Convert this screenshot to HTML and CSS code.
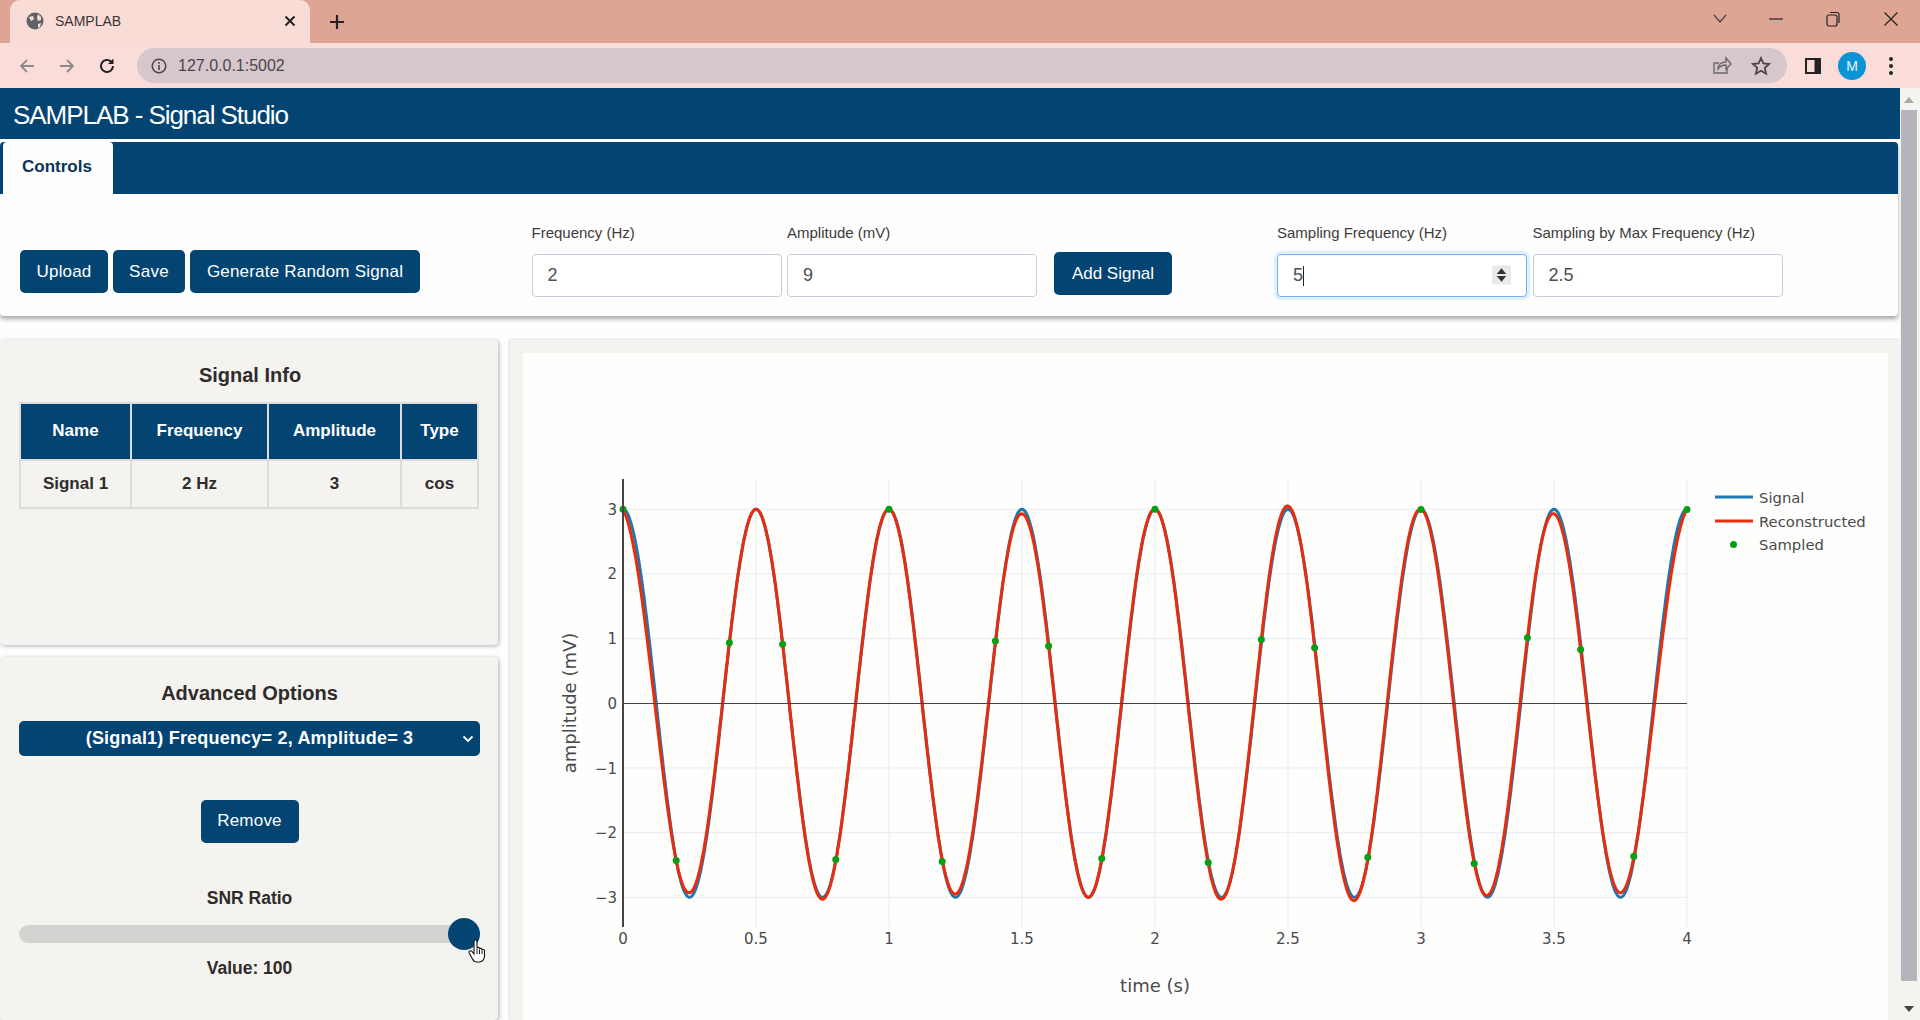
FILE: index.html
```html
<!DOCTYPE html>
<html lang="en">
<head>
<meta charset="utf-8">
<title>SAMPLAB</title>
<link rel="stylesheet" href="styles.css">
</head>
<body>
<div class="tabstrip">
  <div class="tab">
    <svg class="favicon" viewBox="0 0 18 18"><circle cx="9" cy="9" r="8.5" fill="#5f6368"/><path d="M3 5l4-1 1 3-3 2zM12 2l3 3 0 3-3 1-1-3zM12 12l3-1-1 4-2 1z" fill="#f9dcd6"/></svg>
    <span class="tab-title">SAMPLAB</span>
    <svg class="tab-close" viewBox="0 0 12 12"><path d="M1.5 1.5l9 9M10.5 1.5l-9 9" stroke="#222" stroke-width="2"/></svg>
  </div>
  <svg class="new-tab" viewBox="0 0 16 16"><path d="M8 1v14M1 8h14" stroke="#222" stroke-width="2.2"/></svg>
  <div class="window-btns">
    <svg class="win w-chev" viewBox="0 0 16 16"><path d="M2 4l6 7 6-7" fill="none" stroke="#444" stroke-width="1.2"/></svg>
    <svg class="win w-min" viewBox="0 0 16 16"><path d="M1 8h14" stroke="#222" stroke-width="1.2"/></svg>
    <svg class="win w-rest" viewBox="0 0 16 16"><rect x="2" y="4" width="10" height="11" rx="2" fill="none" stroke="#222" stroke-width="1.2"/><path d="M5 1.500h7a2 2 0 0 1 2 2V12" fill="none" stroke="#222" stroke-width="1.2"/></svg>
    <svg class="win w-close" viewBox="0 0 16 16"><path d="M1.500 1.500l13 13M14.500 1.500l-13 13" stroke="#222" stroke-width="1.2"/></svg>
  </div>
</div>
<div class="toolbar">
  <svg class="nav nav-first" viewBox="0 0 18 18"><path d="M16 9H3M9 3L3 9l6 6" fill="none" stroke="#8d8a8c" stroke-width="1.800"/></svg>
  <svg class="nav" viewBox="0 0 18 18"><path d="M2 9h13M9 3l6 6-6 6" fill="none" stroke="#8d8a8c" stroke-width="1.800"/></svg>
  <svg class="nav" viewBox="0 0 18 18"><path d="M15 9a6 6 0 1 1-1.800-4.300" fill="none" stroke="#222" stroke-width="2"/><path d="M15.500 1.500v5.500H10z" fill="#222"/></svg>
  <div class="urlbar">
    <svg class="info" viewBox="0 0 16 16"><circle cx="8" cy="8" r="6.800" fill="none" stroke="#4a4648" stroke-width="1.500"/><path d="M8 7v5M8 4v1.800" stroke="#4a4648" stroke-width="1.600"/></svg>
    <span class="url">127.0.0.1:5002</span>
    <svg class="share" viewBox="0 0 20 20"><path d="M15 11v6H2V7h5" fill="none" stroke="#6b686a" stroke-width="1.400"/><path d="M6 13c0-5 4-7 8-7V2l5 6-5 5V9c-4 0-6 1-8 4z" fill="none" stroke="#6b686a" stroke-width="1.400"/></svg>
    <svg class="star" viewBox="0 0 20 20"><path d="M10 2l2.400 5.400 5.800.6-4.400 3.900 1.300 5.800L10 14.700l-5.100 3 1.300-5.800L1.800 8l5.800-.6z" fill="none" stroke="#4a4648" stroke-width="1.800"/></svg>
  </div>
  <svg class="panel-ico" viewBox="0 0 18 18"><rect x="1" y="1" width="16" height="16" fill="#222"/><rect x="3" y="3" width="7.500" height="12" fill="#f9dcd8"/></svg>
  <div class="avatar">M</div>
  <svg class="kebab" viewBox="0 0 6 20"><circle cx="3" cy="3" r="2" fill="#222"/><circle cx="3" cy="10" r="2" fill="#222"/><circle cx="3" cy="17" r="2" fill="#222"/></svg>
</div>

<div class="viewport">
  <div class="app">
    <header class="app-header">SAMPLAB - Signal Studio</header>
    <section class="controls-card">
      <nav class="tabbar"><button class="tabbar-tab">Controls</button></nav>
      <div class="controls">
        <div class="btn-group">
          <button class="btn btn-upload">Upload</button>
          <button class="btn btn-save">Save</button>
          <button class="btn btn-gen">Generate Random Signal</button>
        </div>
        <div class="field-pair pair-signal">
          <label class="field"><span class="field-label">Frequency (Hz)</span><input class="field-input" value="2"></label>
          <label class="field"><span class="field-label">Amplitude (mV)</span><input class="field-input" value="9"></label>
        </div>
        <button class="btn btn-add">Add Signal</button>
        <div class="field-pair pair-sampling">
          <label class="field"><span class="field-label">Sampling Frequency (Hz)</span>
            <span class="input-wrap">
              <input class="field-input is-focus" value="5">
              <span class="caret"></span>
              <svg class="spinner" viewBox="0 0 20 20"><rect width="20" height="20" fill="#e9e9e9"/><path d="M10 3l5 6H5zM10 17l-5-6h10z" fill="#333"/></svg>
            </span>
          </label>
          <label class="field"><span class="field-label">Sampling by Max Frequency (Hz)</span><input class="field-input" value="2.5"></label>
        </div>
      </div>
    </section>

    <main class="workspace">
      <div class="sidebar">
        <section class="panel panel-info">
          <h2 class="panel-title">Signal Info</h2>
          <table class="info-table">
            <thead><tr><th class="c-name">Name</th><th class="c-freq">Frequency</th><th class="c-amp">Amplitude</th><th class="c-type">Type</th></tr></thead>
            <tbody><tr><td>Signal 1</td><td>2 Hz</td><td>3</td><td>cos</td></tr></tbody>
          </table>
        </section>
        <section class="panel panel-adv">
          <h2 class="panel-title">Advanced Options</h2>
          <div class="select-wrap">
            <select class="signal-select"><option>(Signal1) Frequency= 2, Amplitude= 3</option></select>
            <svg class="select-chev" viewBox="0 0 12 8"><path d="M1.500 1.500L6 6l4.500-4.500" fill="none" stroke="#fff" stroke-width="1.800"/></svg>
          </div>
          <div class="center-row"><button class="btn btn-remove">Remove</button></div>
          <div class="snr-label">SNR Ratio</div>
          <div class="slider-wrap">
            <input class="snr-slider" type="range" min="0" max="100" value="100">
            <svg class="hand" viewBox="0 0 18 24"><path d="M6 2.500c0-2 3-2 3 0v7c0-1.500 2.500-1.500 2.500 0v1c0-1.500 2.500-1.500 2.500 0v1c0-1.300 2.500-1.300 2.500 0V17c0 3-2 6-5 6H9c-2.500 0-3.500-1-4.500-3L1.200 14c-1-2 1.500-3 2.800-1.500L6 15z" fill="#fff" stroke="#111" stroke-width="1.100"/><path d="M9 10v5M11.500 11v4M14 12v3" stroke="#111" stroke-width="1"/></svg>
          </div>
          <div class="snr-value">Value: 100</div>
        </section>
      </div>

      <section class="panel-plot">
        <svg id="chart" class="chart" viewBox="523 353 1365 667">
          <g class="grid">
            <path d="M756 479V927M889 479V927M1022 479V927M1155 479V927M1288 479V927M1421 479V927M1554 479V927M1687 479V927"/>
            <path d="M623 509.300H1687M623 574H1687M623 638.700H1687M623 768H1687M623 832.700H1687M623 897.300H1687"/>
          </g>
          <g id="traces"></g>
          <path class="zero" d="M623 703.500H1687"/>
          <path class="axis" d="M623 479V927"/>
          <g class="tick-y">
            <text x="617" y="514.500">3</text><text x="617" y="579">2</text><text x="617" y="644">1</text><text x="617" y="709">0</text>
            <text x="617" y="773.500">−1</text><text x="617" y="838">−2</text><text x="617" y="903">−3</text>
          </g>
          <g class="tick-x">
            <text x="623" y="944">0</text><text x="756" y="944">0.5</text><text x="889" y="944">1</text><text x="1022" y="944">1.5</text>
            <text x="1155" y="944">2</text><text x="1288" y="944">2.5</text><text x="1421" y="944">3</text><text x="1554" y="944">3.5</text><text x="1687" y="944">4</text>
          </g>
          <text class="axis-title" x="1155" y="992">time (s)</text>
          <text class="axis-title" transform="translate(576 703) rotate(-90)">amplitude (mV)</text>
          <g class="legend">
            <path class="tr-signal" d="M1715 497H1753"/>
            <path class="tr-recon" d="M1715 521H1753"/>
            <circle class="tr-sample" cx="1733.500" cy="544.500" r="3.500"/>
            <text x="1759" y="503">Signal</text><text x="1759" y="527">Reconstructed</text><text x="1759" y="550">Sampled</text>
          </g>
        </svg>
      </section>
    </main>
  </div>
  <div class="scrollbar">
    <span class="sb-arrow sb-up"></span>
    <span class="sb-thumb"></span>
    <span class="sb-arrow sb-down"></span>
  </div>
</div>
<script src="chart.js"></script>
</body>
</html>
```
FILE: styles.css
```css
* { box-sizing: border-box; }
html, body { margin: 0; height: 1020px; overflow: hidden; }
body { font-family: "Liberation Sans", Arial, sans-serif; background: #fefefe; color: #2f2b2b; display: flex; flex-direction: column; }

/* browser chrome */
.tabstrip { height: 43px; background: #dfa594; display: flex; align-items: flex-end; padding-left: 10px; position: relative; flex: none; }
.tab { width: 300px; height: 43px; background: #f9dcd6; border-radius: 10px 10px 0 0; display: flex; align-items: center; padding: 0 14px 2px 16px; }
.favicon { width: 18px; height: 18px; }
.tab-title { font-size: 14px; margin-left: 11px; color: #3a3436; flex: 1; }
.tab-close { width: 12px; height: 12px; }
.new-tab { width: 16px; height: 16px; margin: 0 0 13px 19px; }
.window-btns { position: absolute; top: 0; left: 0; width: 100%; height: 100%; pointer-events: none; }
.win { position: absolute; top: 14px; width: 16px; height: 16px; }
.w-chev { left: 1712px; top: 11px; }
.w-min { left: 1768px; top: 11px; }
.w-rest { left: 1825px; top: 11px; }
.w-close { left: 1883px; top: 11px; }

.toolbar { height: 45px; background: #fadcd8; display: flex; align-items: center; padding: 0 0 0 18px; flex: none; }
.nav { width: 18px; height: 18px; margin-right: 22px; }
.urlbar { width: 1650px; height: 35px; margin-left: -1px; border-radius: 18px; background: #d6c6cd; display: flex; align-items: center; padding: 0 14px 0 14px; }
.info { width: 16px; height: 16px; }
.url { font-size: 16px; color: #4a4648; margin-left: 11px; flex: 1; }
.share { width: 20px; height: 20px; margin-right: 19px; }
.star { width: 20px; height: 20px; margin-right: 2px; }
.panel-ico { width: 18px; height: 18px; margin-left: 17px; }
.avatar { width: 28px; height: 28px; margin-left: 16px; border-radius: 50%; background: #0a94d6; color: #e8f4fb; font-size: 14px; display: flex; align-items: center; justify-content: center; }
.kebab { width: 6px; height: 20px; margin-left: 22px; }

.viewport { flex: 1; min-height: 0; display: flex; }
.app { flex: 1; min-width: 0; display: flex; flex-direction: column; }
.app-header { height: 51px; background: #034472; color: #fff; font-size: 26px; line-height: 55px; letter-spacing: -1.05px; padding-left: 13px; margin-bottom: 3px; flex: none; overflow: hidden; }

/* controls */
.controls-card { height: 174px; margin-right: 2px; flex: none; background: #fefefe; border-radius: 4px; box-shadow: 0 3px 4px rgba(60, 60, 70, 0.45); }
.tabbar { height: 52px; background: #034472; border-radius: 4px 4px 0 0; padding-left: 3px; }
.tabbar-tab { width: 110px; height: 52px; border: 0; border-radius: 4px 4px 0 0; background: #fefefe; color: #0c3358; font: bold 17px "Liberation Sans", Arial, sans-serif; padding: 0 2px 2px 0; }
.controls { height: 122px; padding: 30px 0 0 20px; display: flex; align-items: flex-start; }
.btn { height: 43px; border: 0; border-radius: 5px; background: #034472; color: #fff; font: 17px "Liberation Sans", Arial, sans-serif; padding: 0; }
.btn-group { display: flex; gap: 5px; margin-top: 26px; }
.btn-upload { width: 88px; letter-spacing: 0.15px; }
.btn-save { width: 72px; letter-spacing: 0.3px; }
.btn-gen { width: 230px; letter-spacing: 0.2px; }
.btn-remove { width: 98px; letter-spacing: 0.2px; }
.field-pair { display: flex; gap: 5.500px; }
.pair-signal { margin-left: 111.500px; }
.pair-sampling { margin-left: 105px; }
.btn-add { width: 118px; margin: 28px 0 0 17px; }
.field { width: 250px; display: block; }
.field-label { display: block; height: 18px; line-height: 18px; font-size: 15px; color: #3d3a3a; margin-bottom: 12px; white-space: nowrap; }
.field-input { width: 100%; height: 43px; border: 1.500px solid #c9cbdd; border-radius: 4px; padding: 0 15px; font: 18px "Liberation Sans", Arial, sans-serif; color: #4a4f55; background: #fff; outline: 0; }
.field-input.is-focus { border-color: #73b3f3; box-shadow: 0 0 0 3px rgba(120, 190, 250, 0.22); }
.input-wrap { display: block; position: relative; }
.caret { position: absolute; left: 26px; top: 12px; width: 1px; height: 20px; background: #222; }
.spinner { position: absolute; right: 16px; top: 11px; width: 19px; height: 20px; }

/* workspace */
.workspace { flex: 1; min-height: 0; display: grid; grid-template-columns: 498px 1fr; column-gap: 12px; padding-top: 24px; overflow: hidden; }
.sidebar { display: flex; flex-direction: column; gap: 12px; min-height: 0; }
.panel { background: #f4f3ef; border-radius: 4px; box-shadow: 1px 1px 4px rgba(60, 60, 70, 0.4); padding: 0 18px 0 20px; }
.panel-info { height: 305px; flex: none; padding: 23.500px 18px 0 20px; }
.panel-adv { flex: 1; padding: 24.500px 18px 0 19px; }
.panel-title { margin: 0 0 15px; text-align: center; font-size: 20px; line-height: 23px; font-weight: bold; color: #2f2b2b; }
.panel-adv .panel-title { margin-bottom: 16px; }
.info-table { border-collapse: collapse; table-layout: fixed; width: 458px; margin-left: -1px; font-size: 17px; font-weight: bold; text-align: center; }
.info-table th { height: 57px; background: #034472; color: #fff; border: 2px solid #dcdcdc; padding: 0; }
.info-table td { height: 48px; border: 2px solid #dcdcdc; padding: 0; color: #2f2b2b; }
.c-name { width: 111px; }
.c-freq { width: 137px; }
.c-amp { width: 133px; }
.c-type { width: 77px; }
.select-wrap { position: relative; height: 35px; }
.signal-select { width: 100%; height: 35px; border: 0; border-radius: 5px; background: #034472; color: #fff; font: bold 18px "Liberation Sans", Arial, sans-serif; letter-spacing: 0.2px; text-align: center; text-align-last: center; appearance: none; outline: 0; padding: 0; }
.select-chev { position: absolute; right: 6px; top: 14px; width: 12px; height: 8px; }
.center-row { margin-top: 44px; display: flex; justify-content: center; }
.snr-label, .snr-value { text-align: center; font-size: 17.500px; line-height: 20px; font-weight: bold; color: #2f2b2b; }
.snr-label { margin-top: 45px; }
.slider-wrap { position: relative; margin-top: 17px; height: 18px; }
.snr-slider { display: block; width: 100%; height: 18px; margin: 0; appearance: none; background: #d3d3d2; border-radius: 9px; outline: 0; }
.snr-slider::-webkit-slider-thumb { appearance: none; width: 32px; height: 32px; border-radius: 50%; background: #034472; }
.hand { position: absolute; left: 449px; top: 14px; width: 18px; height: 24px; }
.snr-value { margin-top: 15px; }

/* plot */
.panel-plot { background: #f4f3ef; padding: 13px 12px 0 13px; overflow: hidden; box-shadow: 0 0 3px rgba(60, 60, 70, 0.3); }
.chart { display: block; width: 1365px; height: 667px; background: #fefefd; }
.grid path { fill: none; stroke: #e9ebf2; stroke-width: 1; }
.zero { fill: none; stroke: #444; stroke-width: 1; }
.axis { fill: none; stroke: #444; stroke-width: 2; }
.tr-signal { fill: none; stroke: #1f77b4; stroke-width: 3; }
.tr-recon { fill: none; stroke: #e82c0c; stroke-width: 3; }
.tr-sample { fill: #0a9e12; }
.tick-y text, .tick-x text, .legend text, .axis-title { font-family: "DejaVu Sans", Verdana, sans-serif; fill: #4a4a4a; }
.tick-y text { font-size: 15px; text-anchor: end; }
.tick-x text { font-size: 15px; text-anchor: middle; }
.legend text { font-size: 14.800px; }
.axis-title { font-size: 18px; text-anchor: middle; }

/* scrollbar */
.scrollbar { width: 20px; flex: none; background: #f4f3ef; position: relative; }
.sb-thumb { position: absolute; left: 1px; right: 3px; top: 22px; bottom: 39px; background: #b4b4bc; }
.sb-arrow { position: absolute; left: 4px; width: 0; height: 0; border-left: 5px solid transparent; border-right: 5px solid transparent; }
.sb-up { top: 9px; border-bottom: 6px solid #a9a9a9; }
.sb-down { bottom: 8px; border-top: 6px solid #444; }
```
FILE: chart.js
```js
// Builds the signal, sampled and reconstructed traces from the data.
(function () {
  var NS = 'http://www.w3.org/2000/svg';
  var host = document.getElementById('traces');
  var X0 = 623, PXS = 266, Y0 = 703.3, PYU = 64.67;
  var A = 3, F = 2, FS = 5, DUR = 4, DRIFT = 0.009;
  // Height of the reconstructed curve at each quarter second.
  var EXTREMES = [3, -2.93, 3, -3.03, 3, -2.95, 2.93, -3, 3, -3.03, 3.05, -3.05, 3, -2.97, 2.93, -2.93, 3];
  function px(t) { return X0 + t * PXS; }
  function py(v) { return Y0 - v * PYU; }
  function signal(t) { return A * Math.cos(2 * Math.PI * F * t); }
  function sinc(x) { return x === 0 ? 1 : Math.sin(Math.PI * x) / (Math.PI * x); }

  var samples = [];
  for (var n = 0; n <= DUR * FS; n++) {
    var ts = n / FS;
    samples.push({ t: ts, v: A * Math.cos(2 * Math.PI * F * ts + DRIFT * ts) });
  }
  function interpolated(t) {
    var s = 0;
    for (var i = 0; i < samples.length; i++) s += samples[i].v * sinc(FS * t - i);
    return s;
  }
  var gains = EXTREMES.map(function (v, i) { return v / interpolated(i / 4); });
  function recon(t) {
    var q = Math.min(t * 4, EXTREMES.length - 1.001);
    var k = Math.floor(q), f = q - k;
    return interpolated(t) * (gains[k] * (1 - f) + gains[k + 1] * f);
  }
  function line(fn, cls) {
    var d = '';
    for (var k = 0; k <= 1000; k++) {
      var t = k * DUR / 1000;
      d += (k ? 'L' : 'M') + px(t).toFixed(1) + ' ' + py(fn(t)).toFixed(1);
    }
    var p = document.createElementNS(NS, 'path');
    p.setAttribute('d', d);
    p.setAttribute('class', cls);
    host.appendChild(p);
  }
  line(signal, 'tr-signal');
  line(recon, 'tr-recon');
  samples.forEach(function (s) {
    var c = document.createElementNS(NS, 'circle');
    c.setAttribute('cx', px(s.t).toFixed(1));
    c.setAttribute('cy', py(s.v).toFixed(1));
    c.setAttribute('r', '3.5');
    c.setAttribute('class', 'tr-sample');
    host.appendChild(c);
  });
})();
```
